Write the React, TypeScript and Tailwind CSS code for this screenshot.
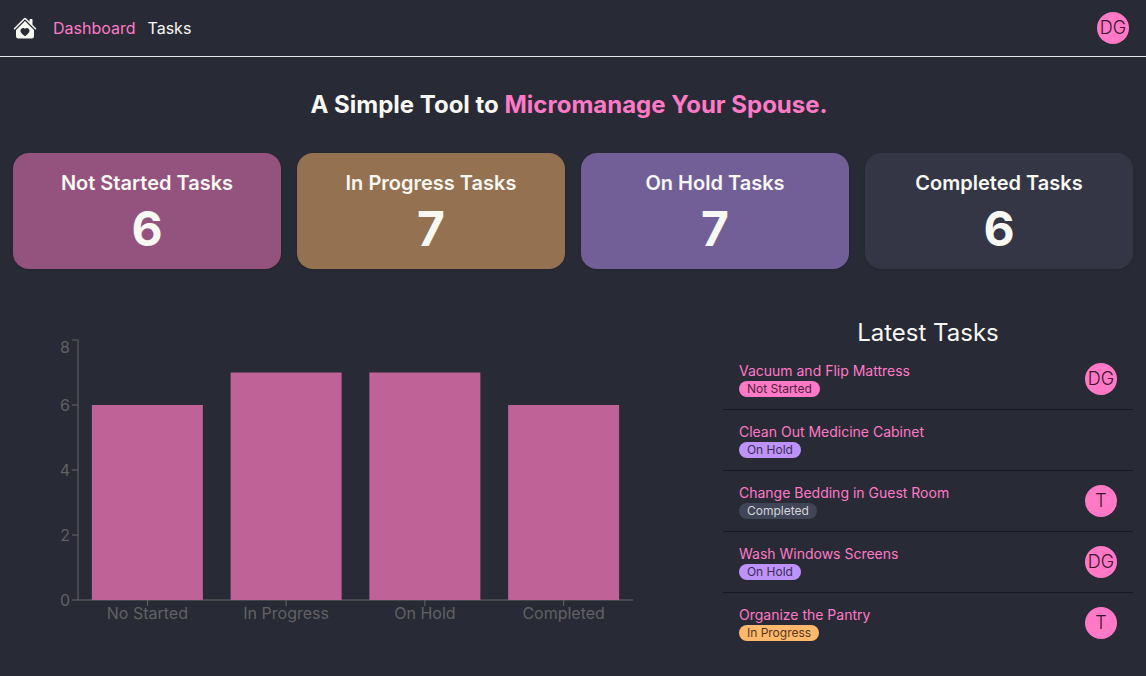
import { BsHouseHeartFill } from "react-icons/bs";

type Status = "Not Started" | "In Progress" | "On Hold" | "Completed";

const statCards = [
  { title: "Not Started Tasks", count: 6, color: "bg-[#ff79c6]/50" },
  { title: "In Progress Tasks", count: 7, color: "bg-[#ffb86c]/50" },
  { title: "On Hold Tasks", count: 7, color: "bg-[#bd93f9]/50" },
  { title: "Completed Tasks", count: 6, color: "bg-[#353645]" },
];

const chartData = [
  { name: "No Started", total: 6 },
  { name: "In Progress", total: 7 },
  { name: "On Hold", total: 7 },
  { name: "Completed", total: 6 },
];

const badgeColors: Record<Status, string> = {
  "Not Started": "bg-[#ff79c6] text-[#521f3d]",
  "In Progress": "bg-[#ffb86c] text-[#523a20]",
  "On Hold": "bg-[#bd93f9] text-[#3c2c52]",
  Completed: "bg-[#414558] text-[#d6d7db]",
};

const latestTasks: { title: string; status: Status; assignee?: string }[] = [
  { title: "Vacuum and Flip Mattress", status: "Not Started", assignee: "DG" },
  { title: "Clean Out Medicine Cabinet", status: "On Hold" },
  { title: "Change Bedding in Guest Room", status: "Completed", assignee: "T" },
  { title: "Wash Windows Screens", status: "On Hold", assignee: "DG" },
  { title: "Organize the Pantry", status: "In Progress", assignee: "T" },
];

function Avatar({ initials }: { initials: string }) {
  return (
    <span className="flex size-8 shrink-0 items-center justify-center rounded-full bg-[#ff79c6] text-lg font-light text-[#3a142b]">
      {initials}
    </span>
  );
}

function TaskChart() {
  const left = 65;
  const right = 620;
  const top = 5;
  const bottom = 265;
  const max = 8;
  const band = (right - left) / chartData.length;
  const y = (value: number) => bottom - ((bottom - top) * value) / max;

  return (
    <svg
      width="625"
      height="300"
      viewBox="0 0 625 300"
      className="h-auto max-w-full text-base"
      role="img"
      aria-label="Tasks by status"
    >
      <g stroke="#666" fill="none">
        <path d={`M${left} ${top}V${bottom}H${right}`} />
        {[0, 2, 4, 6, 8].map((tick) => (
          <path key={tick} d={`M${left - 6} ${y(tick)}H${left}`} />
        ))}
        {chartData.map((item, i) => (
          <path key={item.name} d={`M${left + band * (i + 0.5)} ${bottom}v6`} />
        ))}
      </g>
      <g fill="#616163">
        {[0, 2, 4, 6, 8].map((tick) => (
          <text
            key={tick}
            x={left - 8}
            y={(tick === max ? y(tick) + 7 : y(tick)) + 6}
            textAnchor="end"
          >
            {tick}
          </text>
        ))}
        {chartData.map((item, i) => (
          <text key={item.name} x={left + band * (i + 0.5)} y={bottom + 19} textAnchor="middle">
            {item.name}
          </text>
        ))}
      </g>
      {chartData.map((item, i) => (
        <rect
          key={item.name}
          x={left + band * (i + 0.1)}
          y={y(item.total)}
          width={Math.floor(band * 0.8)}
          height={bottom - y(item.total)}
          fill="#be6298"
        />
      ))}
    </svg>
  );
}

export default function App() {
  return (
    <div className="min-h-screen bg-[#282a36] font-[Inter,sans-serif] text-[#f8f8f2]">
      <header className="flex h-[57px] items-center justify-between border-b border-[#e5e7eb] pr-[17px] pl-[13px]">
        <nav className="flex items-center gap-3">
          <a href="#home" aria-label="Home" className="mr-1">
            <BsHouseHeartFill className="size-6" />
          </a>
          <a href="#dashboard" className="text-[#ff79c6]">
            Dashboard
          </a>
          <a href="#tasks">Tasks</a>
        </nav>
        <button type="button" aria-label="Account DG">
          <Avatar initials="DG" />
        </button>
      </header>

      <main className="px-[13px]">
        <h1 className="mt-8 pr-2 text-center text-2xl font-bold">
          A Simple Tool to <span className="text-[#ff79c6]">Micromanage Your Spouse.</span>
        </h1>

        <section className="mt-8 grid grid-cols-4 gap-4">
          {statCards.map((card) => (
            <div
              key={card.title}
              className={`flex flex-col items-center gap-2 rounded-2xl p-4 shadow-sm ${card.color}`}
            >
              <h2 className="text-xl font-semibold">{card.title}</h2>
              <p className="text-5xl font-bold">{card.count}</p>
            </div>
          ))}
        </section>

        <section className="mt-12 grid grid-cols-[22fr_13fr] gap-4">
          <div className="flex items-center">
            <TaskChart />
          </div>
          <div>
            <h2 className="text-center text-2xl">Latest Tasks</h2>
            <ul>
              {latestTasks.map((task) => (
                <li
                  key={task.title}
                  className="flex items-center justify-between border-b border-[#181920] px-4 py-3 last:border-b-0"
                >
                  <div className="flex flex-col items-start">
                    <a href="#task" className="text-sm text-[#ff79c6]">
                      {task.title}
                    </a>
                    <span className={`rounded-full px-2 text-xs ${badgeColors[task.status]}`}>
                      {task.status}
                    </span>
                  </div>
                  {task.assignee && <Avatar initials={task.assignee} />}
                </li>
              ))}
            </ul>
          </div>
        </section>
      </main>
    </div>
  );
}
